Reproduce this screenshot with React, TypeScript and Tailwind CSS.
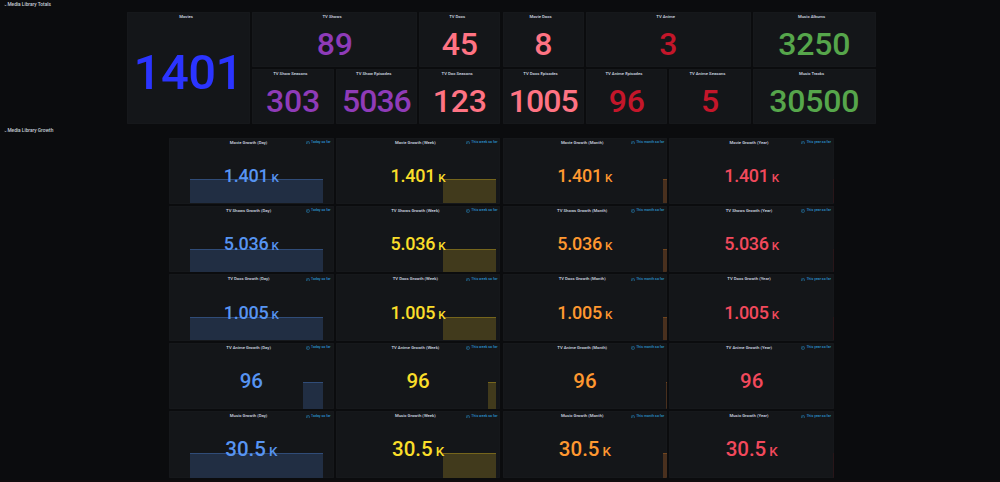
import React from 'react'
import { ChevronDown } from 'lucide-react'

interface Total {
  title: string
  value: string
  className: string
  narrow?: boolean
}

const totals: Total[] = [
  { title: 'TV Shows', value: '89', className: 'col-span-4 text-[#8f3bb8]' },
  { title: 'TV Docs', value: '45', className: 'col-span-2 text-[#ff7383]' },
  { title: 'Movie Docs', value: '8', className: 'col-span-2 text-[#ff7383]' },
  { title: 'TV Anime', value: '3', className: 'col-span-4 text-[#c4162a]' },
  { title: 'Music Albums', value: '3250', className: 'col-span-3 text-[#56a64b]' },
  { title: 'TV Show Seasons', value: '303', className: 'col-span-2 text-[#8f3bb8]' },
  { title: 'TV Show Episodes', value: '5036', className: 'col-span-2 text-[#8f3bb8]', narrow: true },
  { title: 'TV Doc Seasons', value: '123', className: 'col-span-2 text-[#ff7383]' },
  { title: 'TV Docs Episodes', value: '1005', className: 'col-span-2 text-[#ff7383]', narrow: true },
  { title: 'TV Anime Episodes', value: '96', className: 'col-span-2 text-[#c4162a]' },
  { title: 'TV Anime Seasons', value: '5', className: 'col-span-2 text-[#c4162a]' },
  { title: 'Music Tracks', value: '30500', className: 'col-span-3 text-[#56a64b]' },
]

// top: distance from the panel top to the sparkline, in px
const media = [
  { name: 'Movie', value: '1.401', unit: 'K', top: 41.5, bottom: 0.5, small: true },
  { name: 'TV Shows', value: '5.036', unit: 'K', top: 43, bottom: 0.5, small: true },
  { name: 'TV Docs', value: '1.005', unit: 'K', top: 42.5, bottom: 0.5, small: true },
  { name: 'TV Anime', value: '96', unit: '', top: 39, bottom: 0, small: false },
  { name: 'Music', value: '30.5', unit: 'K', top: 42, bottom: 0, small: false },
]

const periods = [
  { name: 'Day', range: 'Today so far', color: 'text-[#5794f2]', area: 'bg-[#212e43] border-[#304c78]', width: 133, late: 20, right: 11 },
  { name: 'Week', range: 'This week so far', color: 'text-[#fade2a]', area: 'bg-[#413a1c] border-[#75651c]', width: 53, late: 8, right: 4.5 },
  { name: 'Month', range: 'This month so far', color: 'text-[#ff9830]', area: 'bg-[#49301e] border-[#70451f]', width: 4, late: 1, right: 0.3 },
  { name: 'Year', range: 'This year so far', color: 'text-[#f2495c]', area: 'bg-[#281619] border-[#281619]', width: 0.7, late: 0, right: 0 },
]

function RowTitle({ children }: { children: React.ReactNode }) {
  return (
    <div className="flex h-[10px] items-center gap-[0.4px] pt-[1px] pl-[4px] text-[4.8px] leading-none font-medium text-[#c7d0d9]">
      <ChevronDown size={3} strokeWidth={5} />
      <span>{children}</span>
    </div>
  )
}

function PanelTitle({ children }: { children: React.ReactNode }) {
  return (
    <div className="absolute inset-x-0 top-[2px] pr-[5.4px] text-center text-[4.25px] leading-[5px] font-medium whitespace-nowrap text-[#d2dae2]">
      {children}
    </div>
  )
}

function TimeRange({ children }: { children: React.ReactNode }) {
  return (
    <div className="absolute top-[2.5px] right-[3px] flex items-center gap-[1.5px] text-[3.55px] leading-[5px] font-medium whitespace-nowrap text-[#2b93cf]">
      <svg className="size-[3.8px]" viewBox="0 0 16 16" fill="none" stroke="currentColor" strokeWidth="2">
        <circle cx="8" cy="8" r="7" />
        <path d="M8 4v5H5" />
      </svg>
      <span>{children}</span>
    </div>
  )
}

const panel = 'relative flex items-center justify-center overflow-hidden rounded-[1px] bg-[#141619] inset-ring-[0.5px] inset-ring-[#191b1e]'

export default function App() {
  return (
    <div className="h-[482px] w-[1000px] overflow-hidden border-b-2 border-[#120b0e] bg-[#0b0c0e] font-['Roboto',sans-serif]">
      <RowTitle>Media Library Totals</RowTitle>
      <div className="mt-[2px] ml-[127.3px] grid h-[112px] w-[748.5px] grid-cols-18 grid-rows-2 gap-[2.2px] font-medium">
        <div className={`${panel} col-span-3 row-span-2 text-[#2b34ff]`}>
          <PanelTitle>Movies</PanelTitle>
          <span className="pt-[9px] pr-[1px] text-[49px] leading-none tracking-[-0.5px]">1401</span>
        </div>
        {totals.map((total) => (
          <div key={total.title} className={`${panel} ${total.className}`}>
            <PanelTitle>{total.title}</PanelTitle>
            <span className={`pt-[9px] text-[32px] leading-none ${total.narrow ? 'tracking-[-1px]' : 'tracking-[-0.2px]'}`}>
              {total.value}
            </span>
          </div>
        ))}
      </div>

      <div className="mt-[1.5px]">
        <RowTitle>Media Library Growth</RowTitle>
      </div>
      <div className="mt-[2px] ml-[169px] grid h-[340.3px] w-[665px] grid-cols-4 grid-rows-5 gap-[2.2px]">
        {media.map((item) =>
          periods.map((period) => (
            <div key={item.name + period.name} className={`${panel} ${period.color}`}>
              <div
                className={`absolute border-t ${period.area}`}
                style={{
                  top: item.top,
                  bottom: item.bottom,
                  right: period.right,
                  width: item.unit ? period.width : period.late,
                }}
              />
              <PanelTitle>
                {item.name} Growth ({period.name})
              </PanelTitle>
              <TimeRange>{period.range}</TimeRange>
              <div className="relative flex items-baseline gap-[3px] pt-[10px] leading-none font-medium">
                <span className={item.small ? 'text-[18px] tracking-[-0.25px]' : 'text-[20.5px]'}>{item.value}</span>
                {item.unit && <span className={item.small ? 'text-[11.7px]' : 'text-[13.4px]'}>{item.unit}</span>}
              </div>
            </div>
          ))
        )}
      </div>
    </div>
  )
}
